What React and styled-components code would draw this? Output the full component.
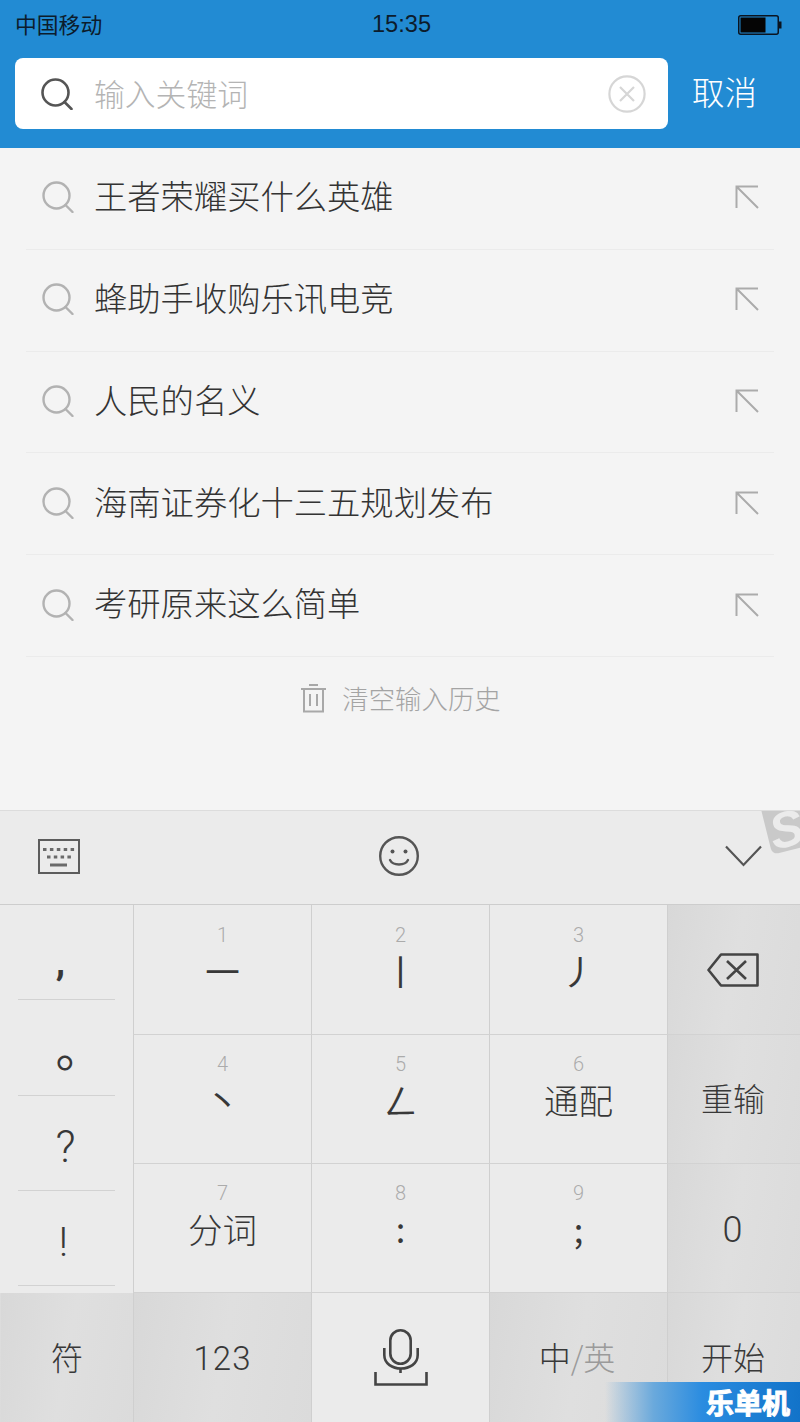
import React from "react";
import styled, { createGlobalStyle } from "styled-components";

const Global = createGlobalStyle`
  html, body { margin: 0; padding: 0; background: #f4f4f4; }
  * { box-sizing: border-box; }
  body { font-family: "Noto Sans CJK SC", "Liberation Sans", sans-serif; }
`;

const Page = styled.div`
  position: relative;
  width: 800px;
  height: 1422px;
  overflow: hidden;
  display: flex;
  flex-direction: column;
  background: #f4f4f4;
`;

const Header = styled.header`
  height: 148px;
  flex: none;
  background: #228bd3;
  display: flex;
  flex-direction: column;
`;

const StatusBar = styled.div`
  height: 58px;
  padding: 0 15px 8px 15px;
  display: grid;
  grid-template-columns: 1fr auto 1fr;
  align-items: center;
  color: #0c1c2c;
`;

const Carrier = styled.span`
  font-size: 21.8px;
  line-height: 1;
  padding-bottom: 2px;
`;

const Clock = styled.span`
  font: 23.6px "Liberation Sans", sans-serif;
  line-height: 1;
  padding-left: 3px;
`;

const BatteryWrap = styled.span`
  justify-self: end;
  display: flex;
  margin-right: 3px;
`;

const SearchRow = styled.div`
  display: flex;
  align-items: center;
  padding: 0 0 0 15px;
`;

const SearchBox = styled.div`
  width: 653px;
  height: 71px;
  background: #fff;
  border-radius: 8px;
  display: flex;
  align-items: center;
  padding: 0 22px 0 26px;
`;

const Placeholder = styled.span`
  margin-left: 21px;
  flex: 1;
  font-size: 30.8px;
  font-weight: 300;
  line-height: 1;
  color: #b4b4b4;
`;

const Cancel = styled.span`
  margin-left: 24px;
  font-size: 32.5px;
  font-weight: 300;
  line-height: 1;
  color: #fff;
  padding-bottom: 4px;
`;

const Main = styled.main`
  flex: 1;
  padding: 0 26px;
  display: flex;
  flex-direction: column;
`;

const HistoryRow = styled.div`
  height: 101.8px;
  flex: none;
  display: flex;
  align-items: center;
  padding: 0 15px 2px 16px;
  border-bottom: 1px solid #ebebeb;
`;

const HistoryText = styled.span`
  flex: 1;
  margin-left: 20px;
  padding-bottom: 5px;
  font-size: 33.3px;
  font-weight: 300;
  line-height: 1;
  color: #333;
`;

const ClearRow = styled.div`
  height: 82px;
  padding-left: 2px;
  display: flex;
  align-items: center;
  justify-content: center;
  gap: 16px;
  color: #a4a4a4;
  font-size: 26.4px;
  font-weight: 300;
  line-height: 1;
`;

const Keyboard = styled.section`
  position: relative;
  flex: none;
  height: 612px;
  overflow: hidden;
  background: #ebebeb;
  border-top: 1px solid #dcdcdc;
`;

const ToolBar = styled.div`
  height: 94px;
  display: grid;
  grid-template-columns: 1fr 1fr 1fr;
  align-items: center;
  padding: 0 38px 3px;
  border-bottom: 1px solid #cdcdcd;
  & > :nth-child(2) { justify-self: center; margin-right: 2px; }
  & > :nth-child(3) { justify-self: end; }
`;

const KeyGrid = styled.div`
  height: 517px;
  display: grid;
  grid-template-columns: 133px 178px 178px 178px 133px;
  grid-template-rows: 130px 129px 129px 129px;
`;

const SymbolColumn = styled.div`
  grid-row: 1 / span 3;
  grid-column: 1;
  padding: 0 18px 7px 18px;
  display: flex;
  flex-direction: column;
`;

const Symbol = styled.div`
  flex: 1;
  display: flex;
  align-items: center;
  justify-content: center;
  border-bottom: 1px solid #d2d2d2;
  line-height: 1;
  color: #383838;
`;

const LatinMark = styled.span`
  font-family: Roboto, sans-serif;
  font-weight: ${(p) => p.$weight || 300};
  font-size: ${(p) => p.$size || 42}px;
  margin: ${(p) => p.$offset || "0"};
`;

const RingMark = styled.span`
  font-weight: 400;
  font-size: 48px;
  margin: 0 0 2px 26px;
`;

const Key = styled.div`
  display: flex;
  flex-direction: column;
  align-items: center;
  justify-content: center;
  padding: 0 ${(p) => (p.$side ? 2 : 0)}px 4px 0;
  border-left: 1px solid ${(p) => (p.$noEdge ? "transparent" : "#cfcfcf")};
  border-bottom: ${(p) => (p.$last ? "0" : "1px solid #d2d2d2")};
  background: ${(p) =>
    p.$dark ? "linear-gradient(100deg, #d8d8d8, #dfdfdf 50%, #dbdbdb)" : "#ebebeb"};
  color: #383838;
  font-size: 32px;
  font-weight: 300;
  line-height: 1;
`;

const DigitKey = styled(Key)`
  padding: 0;
`;

const Hint = styled.span`
  font: 300 20px Roboto, sans-serif;
  line-height: 1;
  color: #ababab;
  height: 22px;
`;

const Stroke = styled.span`
  display: block;
  height: 46px;
  font-size: 34.5px;
  line-height: 46px;
  font-weight: ${(p) => (p.$bold ? 400 : 300)};
  color: #383838;
  margin-bottom: 22px;
`;

const Latin = styled.span`
  font-family: Roboto, sans-serif;
  font-weight: 300;
  font-size: ${(p) => p.$size || 33}px;
  letter-spacing: 1px;
  margin-top: ${(p) => p.$top || 6}px;
`;

const Muted = styled.span`
  color: #9a9a9a;
`;

const SwitchLabel = styled.span`
  margin-right: 3px;
`;

const IconSlot = styled.span`
  display: flex;
  margin-top: 4px;
`;

const SBadge = styled.div`
  position: absolute;
  top: -8px;
  right: -18px;
  width: 52px;
  height: 46px;
  overflow: hidden;
  background: #c9c9c9;
  border-radius: 0 0 6px 6px;
  transform: rotate(-14deg);
  color: #ebebeb;
  font: italic 700 50px/50px "Liberation Sans", sans-serif;
  padding-left: 3px;
`;

const Watermark = styled.div`
  position: absolute;
  right: 0;
  bottom: 0;
  width: 195px;
  height: 40px;
  display: flex;
  align-items: center;
  justify-content: flex-end;
  padding-right: 10px;
  background: linear-gradient(90deg, rgba(30, 125, 210, 0) 0%, #6aa9dc 25%, #2a8ce0 50%, #1273c9 100%);
  color: #fff;
  font-size: 28px;
  font-weight: 700;
  line-height: 1;
  -webkit-text-stroke: 1px #fff;
`;

const SearchIcon = ({ color = "#555", width = 2.6 }) => (
  <svg width="32" height="32" viewBox="0 0 32 32" fill="none" stroke={color} strokeWidth={width} strokeLinecap="round">
    <circle cx="14.5" cy="14.5" r="13" />
    <path d="M23.5 24 L30.5 31" />
  </svg>
);

const ArrowIcon = () => (
  <svg width="24" height="24" viewBox="0 0 24 24" fill="none" stroke="#ababab" strokeWidth="2">
    <path d="M23 1.5 H1.5 V23 M1.5 1.5 L23 23" />
  </svg>
);

const ClearIcon = () => (
  <svg width="38" height="38" viewBox="0 0 38 38" fill="none" stroke="#d6d6d6" strokeWidth="2.2">
    <circle cx="19" cy="19" r="17.6" />
    <path d="M12 12 L26 26 M26 12 L12 26" />
  </svg>
);

const Battery = () => (
  <svg width="44" height="20" viewBox="0 0 44 20">
    <rect x="0.75" y="0.75" width="39.5" height="18.5" rx="2" fill="none" stroke="#0a1420" strokeWidth="1.5" />
    <rect x="2.5" y="2.5" width="25" height="15" fill="#050505" />
    <rect x="41" y="6.5" width="2.5" height="7" fill="#0a1420" />
  </svg>
);

const Trash = () => (
  <svg width="25" height="30" viewBox="0 0 25 30" fill="none" stroke="#a8a8a8" strokeWidth="2">
    <path d="M0 6 H25 M8 2 H17 M3 6 V28.5 H22 V6 M9 11 V23 M16 11 V23" />
  </svg>
);

const KeyboardIcon = () => (
  <svg width="42" height="35" viewBox="0 0 42 35" fill="none">
    <rect x="1" y="1" width="40" height="33" fill="none" stroke="#5c5c5c" strokeWidth="2" />
    <path d="M5 10.5 H37" stroke="#6a6a6a" strokeWidth="3" strokeDasharray="3.5 3.4" />
    <path d="M9 18 H33" stroke="#6a6a6a" strokeWidth="3" strokeDasharray="3.5 3.3" />
    <path d="M12 26 H29" stroke="#6a6a6a" strokeWidth="3" />
  </svg>
);

const Smile = () => (
  <svg width="40" height="40" viewBox="0 0 40 40" fill="none" stroke="#555" strokeWidth="2.4">
    <circle cx="20" cy="20" r="18.8" />
    <circle cx="13.5" cy="15.5" r="2" fill="#555" stroke="none" />
    <circle cx="26.5" cy="15.5" r="2" fill="#555" stroke="none" />
    <path d="M11 24 C14 30 26 30 29 24" strokeLinecap="round" />
  </svg>
);

const Chevron = () => (
  <svg width="37" height="22" viewBox="0 0 37 22" fill="none" stroke="#555" strokeWidth="2.2">
    <path d="M1 1.5 L18.5 20 L36 1.5" />
  </svg>
);

const Backspace = () => (
  <svg width="52" height="34" viewBox="0 0 52 34" fill="none" stroke="#444" strokeWidth="2.6" strokeLinejoin="round">
    <path d="M14 1.5 H50.5 V32.5 H14 L1.5 17 Z" />
    <path d="M20 8 L39 26 M39 8 L20 26" />
  </svg>
);

const Mic = () => (
  <svg width="54" height="57" viewBox="0 0 54 57" fill="none" stroke="#444" strokeWidth="2.6">
    <rect x="16.3" y="1.3" width="20.4" height="33.4" rx="10.2" />
    <path d="M10.3 19 V26 C10.3 44 43.7 44 43.7 26 V19" />
    <path d="M26.5 39 V44" />
    <path d="M1.5 43 V55.5 H52.5 V43" />
  </svg>
);

const items = [
  "王者荣耀买什么英雄",
  "蜂助手收购乐讯电竞",
  "人民的名义",
  "海南证券化十三五规划发布",
  "考研原来这么简单",
];

const digitKeys = [
  { n: 1, s: "一", bold: true },
  { n: 2, s: "丨", bold: true },
  { n: 3, s: "丿", bold: true },
  { n: 4, s: "丶", bold: true },
  { n: 5, s: "ㄥ", bold: true },
  { n: 6, s: "通配" },
  { n: 7, s: "分词" },
  { n: 8, s: ":", bold: true },
  { n: 9, s: ";", bold: true },
];

const sideKeys = {
  0: (
    <IconSlot>
      <Backspace />
    </IconSlot>
  ),
  1: "重输",
  2: (
    <Latin $size={36} $top={8}>
      0
    </Latin>
  ),
};

export default function App() {
  const rows = [0, 1, 2];
  return (
    <Page>
      <Global />
      <Header>
        <StatusBar>
          <Carrier>中国移动</Carrier>
          <Clock>15:35</Clock>
          <BatteryWrap>
            <Battery />
          </BatteryWrap>
        </StatusBar>
        <SearchRow>
          <SearchBox>
            <SearchIcon />
            <Placeholder>输入关键词</Placeholder>
            <ClearIcon />
          </SearchBox>
          <Cancel>取消</Cancel>
        </SearchRow>
      </Header>
      <Main>
        {items.map((t) => (
          <HistoryRow key={t}>
            <SearchIcon color="#b2b2b2" width={2.4} />
            <HistoryText>{t}</HistoryText>
            <ArrowIcon />
          </HistoryRow>
        ))}
        <ClearRow>
          <Trash />
          清空输入历史
        </ClearRow>
      </Main>
      <Keyboard>
        <ToolBar>
          <KeyboardIcon />
          <Smile />
          <Chevron />
        </ToolBar>
        <KeyGrid>
          <SymbolColumn>
            <Symbol>
              <LatinMark $size={38} $weight={700} $offset="20px 12px 0 0">,</LatinMark>
            </Symbol>
            <Symbol>
              <RingMark>。</RingMark>
            </Symbol>
            <Symbol>
              <LatinMark $size={44} $offset="8px 2px 0 0">?</LatinMark>
            </Symbol>
            <Symbol>
              <LatinMark $size={41} $offset="10px 6px 0 0">!</LatinMark>
            </Symbol>
          </SymbolColumn>
          {rows.map((r) => (
            <React.Fragment key={r}>
              {digitKeys.slice(r * 3, r * 3 + 3).map((k) => (
                <DigitKey key={k.n} style={{ gridRow: r + 1 }}>
                  <Hint>{k.n}</Hint>
                  <Stroke $bold={k.bold}>{k.s}</Stroke>
                </DigitKey>
              ))}
              <Key $dark $side style={{ gridRow: r + 1 }}>
                {sideKeys[r]}
              </Key>
            </React.Fragment>
          ))}
          <Key $dark $last $noEdge>符</Key>
          <Key $dark $last>
            <Latin>123</Latin>
          </Key>
          <Key $last>
            <IconSlot>
              <Mic />
            </IconSlot>
          </Key>
          <Key $dark $last>
            <SwitchLabel>
              中<Muted>/英</Muted>
            </SwitchLabel>
          </Key>
          <Key $dark $last $side>开始</Key>
        </KeyGrid>
        <SBadge>S</SBadge>
      </Keyboard>
      <Watermark>乐单机</Watermark>
    </Page>
  );
}
